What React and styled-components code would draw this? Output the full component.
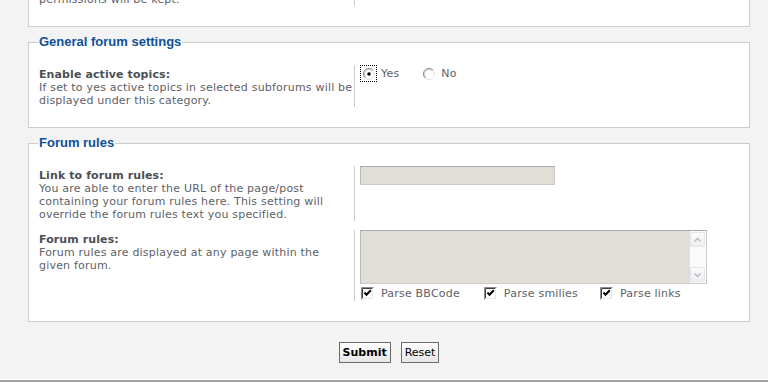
import React from 'react'
import styled, { createGlobalStyle } from 'styled-components'

const GlobalStyle = createGlobalStyle`
  html, body {
    margin: 0;
    padding: 0;
  }
  body {
    background: #f3f3f3;
    font-family: "DejaVu Sans", Verdana, sans-serif;
    font-size: 11px;
    letter-spacing: 0.2px;
    color: #5d6167;
    overflow: hidden;
  }
`

const Page = styled.div`
  display: flex;
  flex-direction: column;
  height: 382px;
  overflow: hidden;
`

const Main = styled.div`
  padding: 0 18px 0 28px;
`

const Fieldset = styled.fieldset`
  margin: ${p => (p.$scrolled ? '-34px 0 8px' : '0 0 8px')};
  padding: ${p => (p.$scrolled ? '23px' : '16px')} 10px 20px;
  border: 1px solid #cccccc;
  background: #ffffff;
  min-width: 0;
`

const Legend = styled.legend`
  padding: 0 1px;
  margin-left: -1px;
  font-family: "Liberation Sans", Arial, sans-serif;
  font-size: 13px;
  font-weight: bold;
  line-height: 14px;
  letter-spacing: 0;
  color: #115098;
`

const Row = styled.dl`
  display: flex;
  margin: 0;

  & + & {
    margin-top: 9px;
  }
`

const Term = styled.dt`
  flex: none;
  width: 315px;
  padding-top: 3px;
  border-right: 1px solid #cccccc;
  line-height: 13px;
`

const Label = styled.label`
  display: block;
  font-weight: bold;
  letter-spacing: 0.1px;
  color: #4b5056;
`

const Explain = styled.span`
  display: block;
`

const Value = styled.dd`
  flex: 1;
  margin: 0;
  padding-left: 5px;
`

const Choices = styled.div`
  display: flex;
  align-items: center;
`

const Choice = styled.label`
  display: inline-flex;
  align-items: center;
  margin-right: ${p => p.$space || 0}px;
  line-height: 15px;
  color: #5d6167;
`

const RadioBox = styled.span`
  display: inline-flex;
  align-items: center;
  justify-content: center;
  width: 15px;
  height: 15px;
  margin-right: 4px;
  border: 1px dotted ${p => (p.$focused ? '#000000' : 'transparent')};
`

const CheckBox = styled.span`
  display: inline-flex;
  margin: 0 7px 0 1px;
`

const TextInput = styled.input`
  display: block;
  box-sizing: border-box;
  width: 195px;
  height: 19px;
  margin: 0;
  padding: 1px 3px;
  border: 1px solid #cdcac4;
  border-top-color: #a9a9a9;
  border-left-color: #b9b9b9;
  background: #e1ddd7;
  font: inherit;
  outline: none;
`

const TextareaBox = styled.div`
  display: flex;
  box-sizing: border-box;
  width: 347px;
  height: 54px;
  border: 1px solid #cdcac4;
  border-top-color: #a9a9a9;
  border-left-color: #b9b9b9;
  background: #e1ddd7;
`

const TextArea = styled.textarea`
  flex: 1;
  margin: 0;
  padding: 2px 3px;
  border: 0;
  background: transparent;
  font: inherit;
  resize: none;
  outline: none;
  overflow: hidden;
`

const ScrollBar = styled.div`
  display: flex;
  flex-direction: column;
  justify-content: space-between;
  width: 16px;
  padding: 1px 0;
  background: #fbfbfb;
`

const ScrollButton = styled.div`
  display: flex;
  align-items: center;
  justify-content: center;
  box-sizing: border-box;
  width: 15px;
  height: 15px;
  border: 1px solid #e4e6ea;
  border-radius: 2px;
  background: linear-gradient(#fafbfc, #eceef1);
`

const CheckRow = styled.div`
  display: flex;
  align-items: center;
  margin-top: 2px;
`

const ButtonRow = styled.div`
  display: flex;
  justify-content: center;
  gap: 10px;
  padding-top: 12px;
`

const Button = styled.button`
  height: 21px;
  padding: 0 3px;
  border: 1px solid #6b6b6b;
  background: linear-gradient(#ffffff, #e6e6e6);
  font-family: "DejaVu Sans", Verdana, sans-serif;
  font-size: 11px;
  font-weight: ${p => (p.$primary ? 'bold' : 'normal')};
  color: #000000;
`

const Footer = styled.div`
  margin-top: auto;
  height: 2px;
  border-top: 1px solid #ffffff;
  background: #a3a3a3;
`

function Radio({ checked }) {
  return (
    <svg width="12" height="12" viewBox="0 0 12 12">
      <circle cx="6" cy="6" r="5.5" fill="#ffffff" stroke="#e2e2e2" />
      <path d="M2.1 9.9 A5.5 5.5 0 0 1 9.9 2.1" fill="none" stroke="#8a8a8a" />
      <path d="M2.8 9.2 A4.5 4.5 0 0 1 9.2 2.8" fill="none" stroke="#c8c8c8" />
      {checked && <circle cx="6" cy="6" r="1.8" fill="#000000" />}
    </svg>
  )
}

function Check() {
  return (
    <svg width="13" height="13" viewBox="0 0 13 13">
      <rect x="0" y="0" width="13" height="13" fill="#ffffff" />
      <path d="M0.5 12.5 V0.5 H12.5" fill="none" stroke="#8a8a8a" />
      <path d="M1.5 11.5 V1.5 H11.5" fill="none" stroke="#404040" />
      <path d="M1.5 11.5 H11.5 V1.5" fill="none" stroke="#e6e6e6" />
      <polyline points="3.5,5.5 5.5,7.8 9.8,3.2" fill="none" stroke="#000000" strokeWidth="2" />
    </svg>
  )
}

function Chevron({ down }) {
  return (
    <svg width="9" height="6" viewBox="0 0 9 6">
      <polyline
        points={down ? '1.5,1.5 4.5,4.5 7.5,1.5' : '1.5,4.5 4.5,1.5 7.5,4.5'}
        fill="none"
        stroke="#b9bcc2"
        strokeWidth="1.5"
      />
    </svg>
  )
}

export default function App() {
  return (
    <Page>
      <GlobalStyle />
      <Main>
        <Fieldset $scrolled>
          <Row>
            <Term>
              <Explain>permissions will be kept.</Explain>
            </Term>
            <Value />
          </Row>
        </Fieldset>

        <Fieldset>
          <Legend>General forum settings</Legend>
          <Row>
            <Term>
              <Label>Enable active topics:</Label>
              <Explain>
                If set to yes active topics in selected subforums will be displayed under this
                category.
              </Explain>
            </Term>
            <Value>
              <Choices>
                <Choice $space={21}>
                  <RadioBox $focused>
                    <Radio checked />
                  </RadioBox>
                  Yes
                </Choice>
                <Choice>
                  <RadioBox>
                    <Radio />
                  </RadioBox>
                  No
                </Choice>
              </Choices>
            </Value>
          </Row>
        </Fieldset>

        <Fieldset>
          <Legend>Forum rules</Legend>
          <Row>
            <Term>
              <Label>Link to forum rules:</Label>
              <Explain>
                You are able to enter the URL of the page/post containing your forum rules here.
                This setting will override the forum rules text you specified.
              </Explain>
            </Term>
            <Value>
              <TextInput type="text" />
            </Value>
          </Row>
          <Row>
            <Term>
              <Label>Forum rules:</Label>
              <Explain>Forum rules are displayed at any page within the given forum.</Explain>
            </Term>
            <Value>
              <TextareaBox>
                <TextArea />
                <ScrollBar>
                  <ScrollButton>
                    <Chevron />
                  </ScrollButton>
                  <ScrollButton>
                    <Chevron down />
                  </ScrollButton>
                </ScrollBar>
              </TextareaBox>
              <CheckRow>
                <Choice $space={23}>
                  <CheckBox>
                    <Check />
                  </CheckBox>
                  Parse BBCode
                </Choice>
                <Choice $space={21}>
                  <CheckBox>
                    <Check />
                  </CheckBox>
                  Parse smilies
                </Choice>
                <Choice>
                  <CheckBox>
                    <Check />
                  </CheckBox>
                  Parse links
                </Choice>
              </CheckRow>
            </Value>
          </Row>
        </Fieldset>

        <ButtonRow>
          <Button $primary>Submit</Button>
          <Button>Reset</Button>
        </ButtonRow>
      </Main>
      <Footer />
    </Page>
  )
}
